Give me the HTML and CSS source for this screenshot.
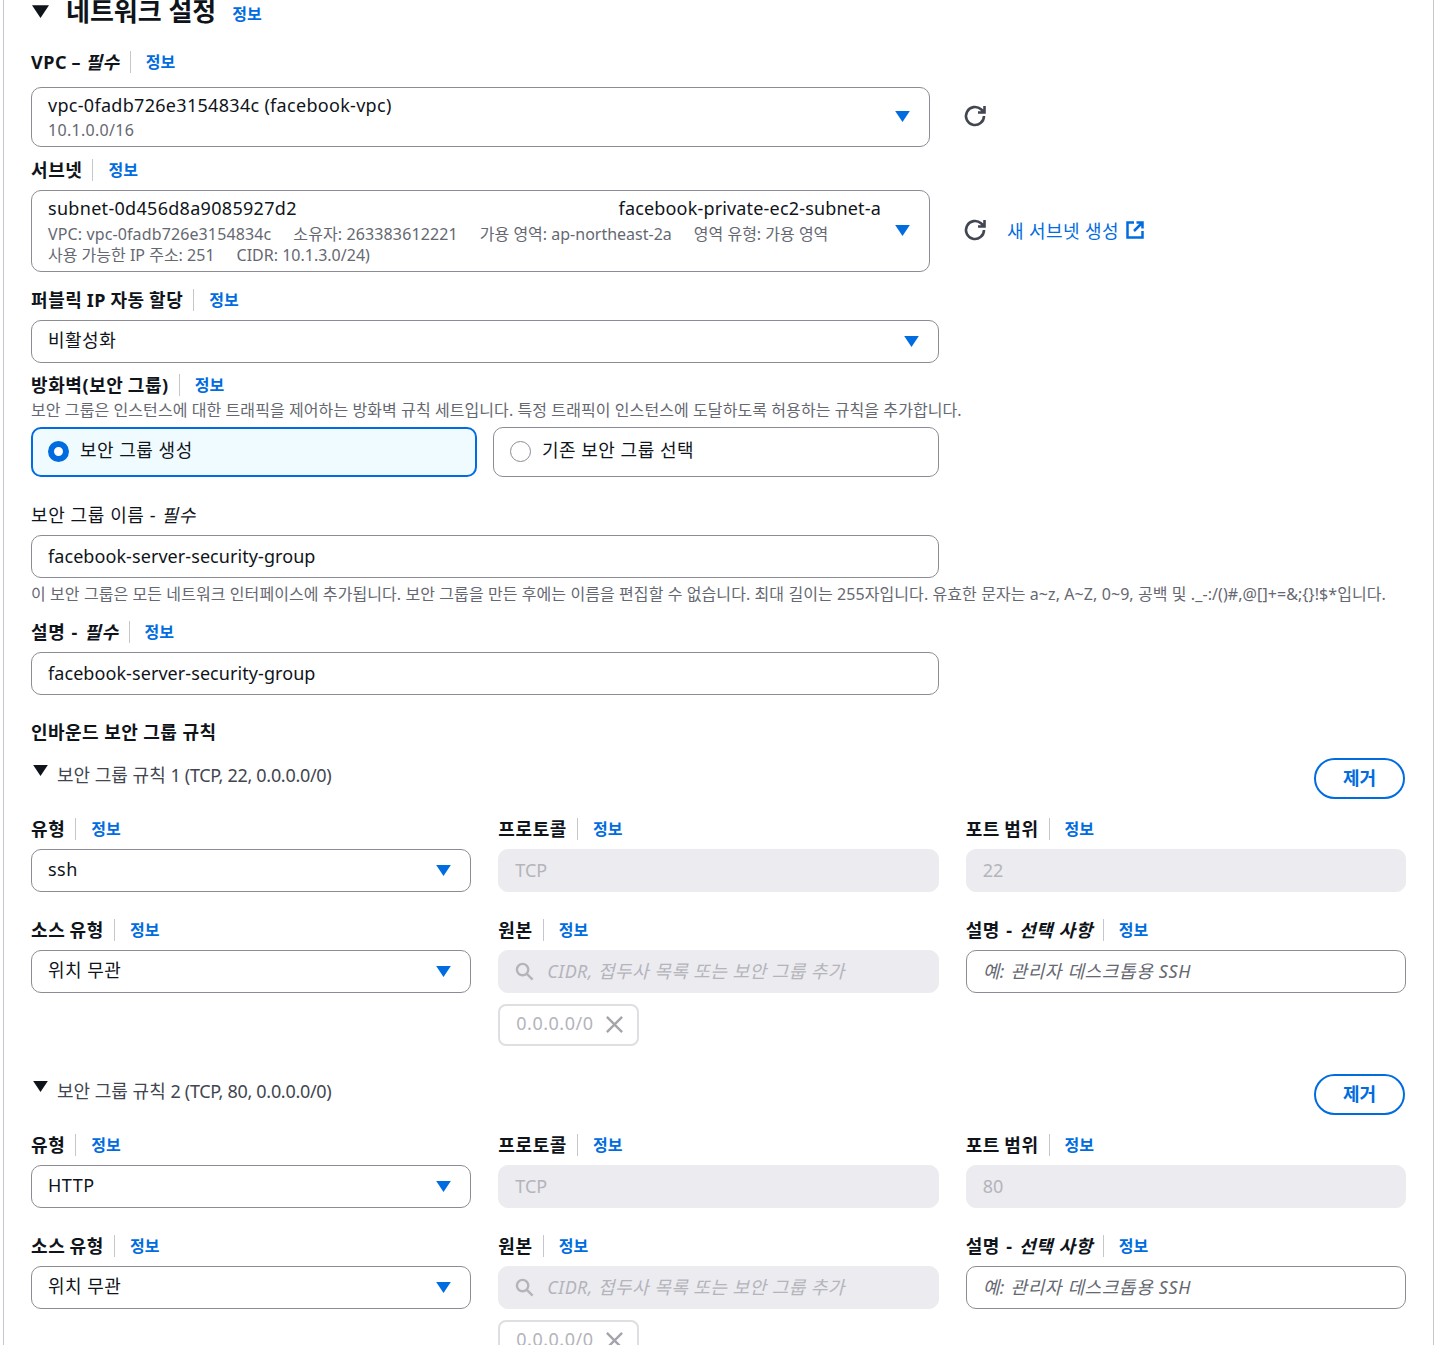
FILE: index.html
```html
<!DOCTYPE html>
<html lang="ko">
<head>
  <meta charset="utf-8">
  <title>네트워크 설정</title>
  <link rel="stylesheet" href="styles.css">
</head>
<body>
  <svg class="defs" width="0" height="0">
    <symbol id="caret" viewBox="0 0 16 12"><path d="M0 0h16L8 12z"/></symbol>
    <symbol id="refresh" viewBox="0 0 24 24"><path d="M21 12a9 9 0 1 1-3-6.700L21 8M21.500 2V8.500H15" fill="none" stroke="currentColor" stroke-width="2.600"/></symbol>
    <symbol id="search" viewBox="0 0 20 20"><circle cx="8" cy="8" r="6" fill="none" stroke="currentColor" stroke-width="2.500"/><path d="M12.500 12.500L18.500 18.500" stroke="currentColor" stroke-width="2.500"/></symbol>
    <symbol id="close" viewBox="0 0 20 20"><path d="M2 2l16 16M18 2L2 18" stroke="currentColor" stroke-width="2.500"/></symbol>
  </svg>

  <div class="panel">
    <div class="section-head">
      <svg class="head-caret"><use href="#caret"/></svg>
      <h2>네트워크 설정</h2>
      <a class="info info-head">정보</a>
    </div>

    <div class="label-row vpc-label"><label>VPC – <i>필수</i></label><a class="info">정보</a></div>
    <div class="with-actions">
      <div class="field select tall vpc-box">
        <div class="value">vpc-0fadb726e3154834c (facebook-vpc)</div>
        <div class="sub">10.1.0.0/16</div>
        <svg class="caret"><use href="#caret"/></svg>
      </div>
      <svg class="refresh"><use href="#refresh"/></svg>
    </div>

    <div class="label-row subnet-label"><label>서브넷</label><a class="info">정보</a></div>
    <div class="with-actions">
      <div class="field select tall subnet-box">
        <div class="value split"><span>subnet-0d456d8a9085927d2</span><span>facebook-private-ec2-subnet-a</span></div>
        <div class="sub sub-first"><span>VPC: vpc-0fadb726e3154834c</span><span>소유자: 263383612221</span><span>가용 영역: ap-northeast-2a</span><span>영역 유형: 가용 영역</span></div>
        <div class="sub"><span>사용 가능한 IP 주소: 251</span><span>CIDR: 10.1.3.0/24)</span></div>
        <svg class="caret"><use href="#caret"/></svg>
      </div>
      <svg class="refresh"><use href="#refresh"/></svg>
      <a class="new-link">새 서브넷 생성
        <svg class="external" viewBox="0 0 20 20"><path d="M9 2.500H2.500v15h15V11M11.500 2.500h6v6M17.500 2.500L9 11" fill="none" stroke="currentColor" stroke-width="2.500"/></svg>
      </a>
    </div>

    <div class="label-row public-label"><label>퍼블릭 IP 자동 할당</label><a class="info">정보</a></div>
    <div class="field select wide"><div class="value">비활성화</div><svg class="caret"><use href="#caret"/></svg></div>

    <div class="label-row fw-label"><label>방화벽(보안 그룹)</label><a class="info">정보</a></div>
    <p class="help fw-help">보안 그룹은 인스턴스에 대한 트래픽을 제어하는 방화벽 규칙 세트입니다. 특정 트래픽이 인스턴스에 도달하도록 허용하는 규칙을 추가합니다.</p>
    <div class="radios">
      <div class="radio-card on"><span class="dot"></span>보안 그룹 생성</div>
      <div class="radio-card"><span class="dot"></span>기존 보안 그룹 선택</div>
    </div>

    <div class="plain-label sg-label">보안 그룹 이름 - <i>필수</i></div>
    <div class="field wide"><div class="value">facebook-server-security-group</div></div>
    <p class="help sg-help">이 보안 그룹은 모든 네트워크 인터페이스에 추가됩니다. 보안 그룹을 만든 후에는 이름을 편집할 수 없습니다. 최대 길이는 255자입니다. 유효한 문자는 a~z, A~Z, 0~9, 공백 및 ._-:/()#,@[]+=&amp;;{}!$*입니다.</p>

    <div class="label-row desc-label"><label class="dash">설명 - <i>필수</i></label><a class="info">정보</a></div>
    <div class="field wide"><div class="value">facebook-server-security-group</div></div>

    <h3>인바운드 보안 그룹 규칙</h3>

    <div class="rule">
      <div class="rule-head">
        <svg class="rule-caret"><use href="#caret"/></svg>
        <span class="rule-title">보안 그룹 규칙 <span class="rule-meta">1 (TCP, 22, 0.0.0.0/0)</span></span>
        <button class="remove">제거</button>
      </div>
      <div class="rule-grid">
        <div>
          <div class="label-row"><label>유형</label><a class="info">정보</a></div>
          <div class="field select"><div class="value">ssh</div><svg class="caret"><use href="#caret"/></svg></div>
        </div>
        <div>
          <div class="label-row"><label>프로토콜</label><a class="info">정보</a></div>
          <div class="field off"><div class="value">TCP</div></div>
        </div>
        <div>
          <div class="label-row"><label>포트 범위</label><a class="info">정보</a></div>
          <div class="field off"><div class="value">22</div></div>
        </div>
        <div>
          <div class="label-row"><label>소스 유형</label><a class="info">정보</a></div>
          <div class="field select"><div class="value">위치 무관</div><svg class="caret"><use href="#caret"/></svg></div>
        </div>
        <div>
          <div class="label-row"><label>원본</label><a class="info">정보</a></div>
          <div class="field off search-field"><svg class="search"><use href="#search"/></svg><div class="value"><i>CIDR, 접두사 목록 또는 보안 그룹 추가</i></div></div>
          <div class="chip">0.0.0.0/0<svg class="chip-x"><use href="#close"/></svg></div>
        </div>
        <div>
          <div class="label-row"><label class="dash">설명 - <i>선택 사항</i></label><a class="info">정보</a></div>
          <div class="field"><div class="value ph"><i>예: 관리자 데스크톱용 SSH</i></div></div>
        </div>
      </div>
    </div>

    <div class="rule">
      <div class="rule-head">
        <svg class="rule-caret"><use href="#caret"/></svg>
        <span class="rule-title">보안 그룹 규칙 <span class="rule-meta">2 (TCP, 80, 0.0.0.0/0)</span></span>
        <button class="remove">제거</button>
      </div>
      <div class="rule-grid">
        <div>
          <div class="label-row"><label>유형</label><a class="info">정보</a></div>
          <div class="field select"><div class="value">HTTP</div><svg class="caret"><use href="#caret"/></svg></div>
        </div>
        <div>
          <div class="label-row"><label>프로토콜</label><a class="info">정보</a></div>
          <div class="field off"><div class="value">TCP</div></div>
        </div>
        <div>
          <div class="label-row"><label>포트 범위</label><a class="info">정보</a></div>
          <div class="field off"><div class="value">80</div></div>
        </div>
        <div>
          <div class="label-row"><label>소스 유형</label><a class="info">정보</a></div>
          <div class="field select"><div class="value">위치 무관</div><svg class="caret"><use href="#caret"/></svg></div>
        </div>
        <div>
          <div class="label-row"><label>원본</label><a class="info">정보</a></div>
          <div class="field off search-field"><svg class="search"><use href="#search"/></svg><div class="value"><i>CIDR, 접두사 목록 또는 보안 그룹 추가</i></div></div>
          <div class="chip">0.0.0.0/0<svg class="chip-x"><use href="#close"/></svg></div>
        </div>
        <div>
          <div class="label-row"><label class="dash">설명 - <i>선택 사항</i></label><a class="info">정보</a></div>
          <div class="field"><div class="value ph"><i>예: 관리자 데스크톱용 SSH</i></div></div>
        </div>
      </div>
    </div>
  </div>
</body>
</html>
```

FILE: styles.css
```css
html, body {
  margin: 0;
  height: 100%;
  overflow: hidden;
  background: #fff;
}

body {
  font-family: "Noto Sans", "Noto Sans CJK KR", sans-serif;
  font-size: 18px;
  color: #0f141a;
}

.defs {
  position: absolute;
}

.panel {
  box-sizing: border-box;
  width: 1431px;
  height: 1400px;
  margin: -8px 0 0 3px;
  padding: 0 27px;
  border-left: 1px solid #c6c6cd;
  border-right: 1px solid #c6c6cd;
}

.section-head {
  display: flex;
  align-items: center;
  height: 38px;
}

.head-caret {
  width: 17px;
  height: 13px;
  margin: 0 17px 0 1px;
  fill: #0f141a;
}

h2 {
  margin: 0;
  font-size: 26px;
  font-weight: 700;
  line-height: 38px;
}

.info {
  color: #006ce0;
  font-size: 16px;
  font-weight: 700;
  line-height: 20px;
}

.info-head {
  margin: 6px 0 0 16px;
}

.label-row {
  display: flex;
  align-items: center;
  height: 22px;
}

.label-row label {
  padding-right: 10px;
  border-right: 1px solid #c6c6cd;
  margin-right: 15px;
  font-weight: 700;
  letter-spacing: 0.6px;
  word-spacing: -1px;
  line-height: 22px;
  white-space: nowrap;
}

.label-row label.dash {
  word-spacing: 1px;
}

.label-row label i {
  word-spacing: 0;
}

.vpc-label { margin-top: 21px; margin-bottom: 14px; }
.subnet-label { margin-top: 12px; margin-bottom: 9px; }
.public-label { margin-top: 17px; margin-bottom: 9px; }
.fw-label { margin-top: 11px; }
.desc-label { margin-top: 16px; margin-bottom: 9px; }

.with-actions {
  display: flex;
  align-items: center;
}

.field {
  box-sizing: border-box;
  position: relative;
  height: 43px;
  padding: 0 16px;
  border: 1px solid #8c8c94;
  border-radius: 10px;
  display: flex;
  align-items: center;
  white-space: nowrap;
}

.wide {
  width: 908px;
}

.tall {
  display: block;
  width: 899px;
  height: auto;
}

.vpc-box {
  height: 60px;
  padding-top: 4px;
}

.subnet-box {
  height: 82px;
  padding-top: 4px;
}

.value {
  line-height: 26px;
}

.wide .value {
  margin-bottom: 2px;
  letter-spacing: 0.07px;
}

.select .value {
  margin-bottom: 3px;
  letter-spacing: 0.5px;
}

.off .value {
  margin-bottom: 2px;
}

.tall .value {
  margin-bottom: 0;
  letter-spacing: 0.3px;
}

.split {
  display: flex;
  justify-content: space-between;
  width: 833px;
}

.split span + span {
  letter-spacing: 0.17px;
}

.sub {
  display: flex;
  gap: 22px;
  color: #656871;
  font-size: 16px;
  line-height: 20px;
}

.sub-first {
  margin-top: 3px;
  margin-bottom: 1px;
}

.sub-first span:nth-child(-n+2) {
  letter-spacing: 0.12px;
}

.vpc-box .sub {
  margin-top: 1px;
  letter-spacing: 0.3px;
  line-height: 22px;
}

.caret {
  position: absolute;
  right: 19px;
  top: 50%;
  width: 15px;
  height: 11px;
  margin-top: -6px;
  fill: #006ce0;
}

.refresh {
  width: 24px;
  height: 24px;
  margin-left: 33px;
  margin-bottom: 2px;
  color: #424650;
}

.new-link {
  display: flex;
  align-items: center;
  gap: 6px;
  margin-left: 20px;
  margin-bottom: 2px;
  color: #006ce0;
  letter-spacing: 0.4px;
}

.external {
  width: 20px;
  height: 20px;
}

.help {
  margin: 0;
  color: #656871;
  font-size: 16px;
  letter-spacing: 0.08px;
  line-height: 22px;
  white-space: nowrap;
}

.fw-help { margin-top: 3px; }
.sg-help { margin-top: 5px; }

.radios {
  display: grid;
  grid-template-columns: 446px 446px;
  gap: 16px;
  margin-top: 6px;
}

.radio-card {
  box-sizing: border-box;
  height: 50px;
  padding: 0 16px 6px;
  border: 1px solid #8c8c94;
  border-radius: 10px;
  display: flex;
  align-items: center;
  gap: 11px;
  letter-spacing: 0.5px;
}

.radio-card.on {
  background: #f0fbff;
  border: 2px solid #006ce0;
  padding-left: 15px;
}

.dot {
  box-sizing: border-box;
  width: 21px;
  height: 21px;
  margin-top: 4px;
  border-radius: 50%;
  border: 1px solid #8c8c94;
  background: #fff;
}

.on .dot {
  border: 6px solid #006ce0;
}

.plain-label {
  letter-spacing: 0.6px;
  line-height: 24px;
}

.sg-label {
  margin-top: 26px;
  margin-bottom: 8px;
}

h3 {
  margin: 25px 0 0;
  font-size: 18px;
  font-weight: 700;
  letter-spacing: 0.45px;
  line-height: 24px;
}

.rule-head {
  display: flex;
  align-items: flex-start;
  height: 41px;
  margin-top: 14px;
}

.rule-caret {
  width: 15px;
  height: 11px;
  margin: 7px 9px 0 2px;
  fill: #0f141a;
}

.rule-title {
  margin-top: 5px;
  color: #424650;
  line-height: 24px;
}

.rule-meta {
  letter-spacing: -0.3px;
}

.remove {
  box-sizing: border-box;
  width: 91px;
  height: 41px;
  margin-left: auto;
  margin-right: 1px;
  padding: 0 0 3px;
  border: 2px solid #006ce0;
  border-radius: 21px;
  background: #fff;
  color: #006ce0;
  font: 700 18px "Noto Sans", "Noto Sans CJK KR", sans-serif;
}

.rule-grid {
  display: grid;
  grid-template-columns: repeat(3, 1fr);
  column-gap: 27px;
  row-gap: 27px;
  margin-top: 19px;
}

.rule-grid .label-row {
  margin-bottom: 9px;
}

.rule + .rule {
  margin-top: 28px;
}

.off {
  background: #ebebf0;
  border-color: #ebebf0;
  color: #b4b4bb;
}

.search-field {
  gap: 13px;
}

.search-field i {
  letter-spacing: 0.45px;
}

.search {
  width: 19px;
  height: 19px;
  color: #b4b4bb;
}

.ph {
  color: #656871;
  letter-spacing: 0.65px;
  margin-bottom: 1px;
}

.chip {
  box-sizing: border-box;
  display: flex;
  align-items: center;
  gap: 12px;
  width: 141px;
  height: 42px;
  margin-top: 11px;
  padding: 0 0 4px 16px;
  border: 2px solid #dedee3;
  border-radius: 8px;
  color: #b4b4bb;
  letter-spacing: 0.5px;
}

.chip-x {
  width: 19px;
  height: 19px;
  margin-top: 3px;
  color: #a4a4ad;
}
```
